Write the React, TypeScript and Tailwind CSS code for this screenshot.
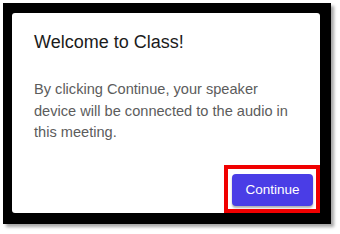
export default function App() {
  return (
    <div className="w-[340px] h-[234px] bg-white pt-[3px] pl-[3px] font-['Liberation_Sans',Arial,sans-serif]">
      <div className="w-[328px] h-[221px] bg-black pt-[10px] pl-[9px] shadow-[3px_3px_3px_rgba(0,0,0,0.35)]">
        <div className="relative w-[308px] h-[200px] bg-white rounded-[3px] flex flex-col pl-[22px] pt-[18px]">
          <h1 className="text-[18px] leading-[22px] text-[#1b1b1b]">Welcome to Class!</h1>
          <p className="mt-[26px] w-[262px] text-[14.6px] leading-[21.5px] text-[#5c5c5c]">
            By clicking Continue, your speaker device will be connected to the audio in this meeting.
          </p>
          <div className="mt-auto flex justify-end pr-[7px] pb-[7px]">
            <button className="w-[81px] h-[32px] rounded-[4px] bg-[#4a3de6] text-white text-[13.5px] shadow-[0_2px_2px_rgba(0,0,0,0.3)]">
              Continue
            </button>
          </div>
          <div className="absolute right-0 bottom-0 w-[96px] h-[48px] border-4 border-[#f00000]" />
        </div>
      </div>
    </div>
  )
}
